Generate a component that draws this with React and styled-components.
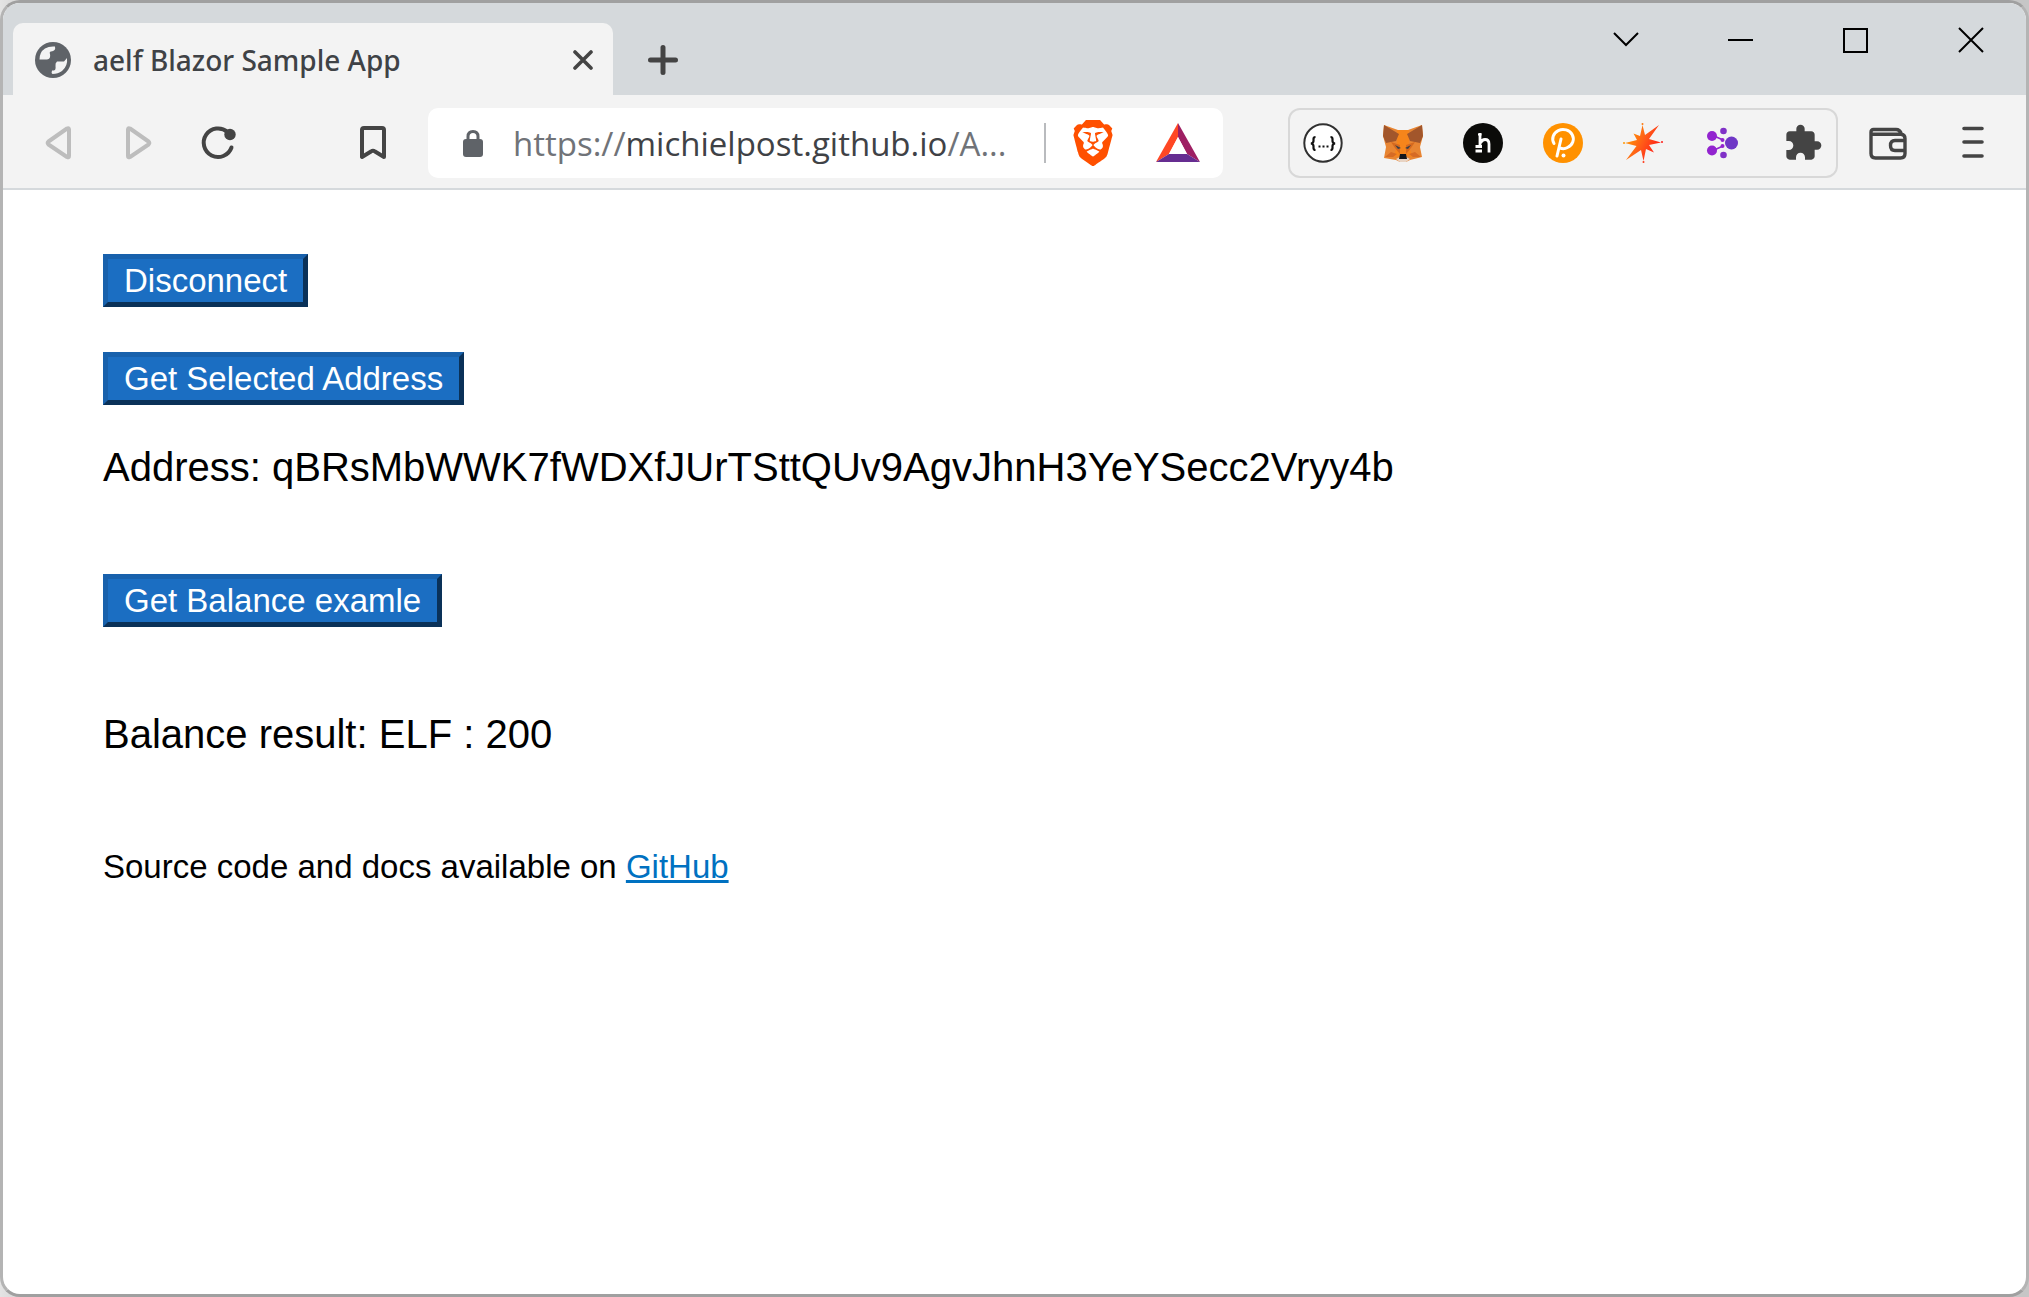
import React from "react";
import styled, { createGlobalStyle } from "styled-components";
import { SiBrave } from "react-icons/si";
import { MdExtension } from "react-icons/md";

const UI_FONT = '"Open Sans", "Noto Sans", sans-serif';
const TITLE_FONT = '"Noto Sans", "Open Sans", sans-serif';
const PAGE_FONT = '"Liberation Sans", Arial, sans-serif';

const GlobalStyle = createGlobalStyle`
  * { box-sizing: border-box; }
  body { margin: 0; background: #c4c4c4; }
  svg { display: block; }
`;

const Desktop = styled.div`
  min-height: 100vh;
  display: flex;
  background: linear-gradient(90deg, #e4e4e4, #c6c6c6 40px, #c6c6c6);
`;

const BrowserWindow = styled.div`
  flex: 1;
  min-width: 0;
  display: flex;
  flex-direction: column;
  border: 3px solid #a0a0a0;
  border-left-color: #b4b4b4;
  border-right-color: #b4b4b4;
  border-radius: 20px;
  background: #fff;
  overflow: hidden;
`;

const TabStrip = styled.header`
  display: flex;
  align-items: flex-end;
  height: 92px;
  padding-left: 10px;
  background: #d5d9dc;
`;

const Tab = styled.div`
  display: flex;
  align-items: center;
  width: 600px;
  height: 72px;
  padding: 2px 20px 0 22px;
  border-radius: 10px 10px 0 0;
  background: #f3f3f3;
`;

const TabTitle = styled.span`
  flex: 1;
  margin-left: 22px;
  font: 500 28px/38px ${TITLE_FONT};
  color: #3f4246;
  white-space: nowrap;
`;

const IconButton = styled.button`
  display: flex;
  align-items: center;
  justify-content: center;
  flex: none;
  width: ${(p) => p.$width || 40}px;
  height: ${(p) => p.$height || 40}px;
  padding: 0;
  border: 0;
  background: none;
  color: ${(p) => p.$color || "#444"};
`;

const NewTab = styled.div`
  display: flex;
  align-items: center;
  height: 72px;
  margin-left: 30px;
  padding-top: 2px;
`;

const WindowControls = styled.div`
  display: flex;
  gap: 4px;
  align-self: flex-start;
  margin-left: auto;
`;

const Toolbar = styled.nav`
  display: flex;
  align-items: center;
  height: 95px;
  padding: 3px 33px 0 35px;
  border-bottom: 2px solid #d5d9dc;
  background: #f3f3f3;
`;

const NavButtons = styled.div`
  display: flex;
  gap: 40px;
`;

const BookmarkSlot = styled.div`
  margin: 0 35px 0 115px;
`;

const AddressBar = styled.div`
  display: flex;
  align-items: center;
  flex: 1;
  min-width: 0;
  height: 70px;
  padding: 0 20px 0 30px;
  border-radius: 10px;
  background: #fff;
`;

const Url = styled.div`
  flex: 1;
  min-width: 0;
  margin-left: 25px;
  padding-top: 2px;
  font: 400 33px/46px ${UI_FONT};
  color: #707378;
  white-space: nowrap;
`;

const Host = styled.span`
  color: #3f4246;
`;

const Divider = styled.span`
  width: 2px;
  height: 40px;
  margin-right: 22px;
  background: #b9bbbe;
`;

const ShieldGroup = styled.div`
  display: flex;
  gap: 35px;
`;

const Extensions = styled.div`
  display: flex;
  align-items: center;
  gap: 40px;
  height: 70px;
  margin-left: 65px;
  padding: 0 13px;
  border: 2px solid #d8d8d8;
  border-radius: 12px;
`;

const MenuGroup = styled.div`
  display: flex;
  gap: 45px;
  margin-left: 30px;
`;

const Page = styled.main`
  flex: 1;
  display: flex;
  flex-direction: column;
  align-items: flex-start;
  padding: 64px 100px;
  font-family: ${PAGE_FONT};
  color: #000;
`;

const ActionButton = styled.button`
  margin: 0 0 ${(p) => p.$after || 0}px;
  padding: 3px 16px 2px;
  border: 5px solid;
  border-color: #1861ac #0a3158 #0a3158 #1861ac;
  background: #1b6ec2;
  color: #fff;
  font: 400 33px/38px ${PAGE_FONT};
`;

const Result = styled.p`
  margin: 0 0 ${(p) => p.$after}px;
  font-size: 40px;
  line-height: 46px;
`;

const Source = styled.p`
  margin: 0;
  font-size: 33px;
  line-height: 40px;
`;

const SourceLink = styled.a`
  color: #0071c1;
  text-decoration: underline;
  text-decoration-thickness: 3px;
`;

const Globe = () => (
  <svg width="36" height="36" viewBox="0 0 36 36">
    <circle cx="18" cy="18" r="18" fill="#5f6368" />
    <path fill="#f3f3f3" d="M20 4.200Q20.500 7 18.500 8.200Q14.500 8 14.500 11V13.500Q14.500 15.500 12 15.500H9.500V18H16Q19.500 18.500 19.500 22V23.500H22Q23 24.500 22 26Q19 27 19 28V31.500Q27 31 30.500 24.500Q32.500 20.500 32 16.500L29 18.500Q27.500 20 25.500 18.500Q21 18.500 21 14.500Q21 12 24 11Q26.500 10.500 27 7.500L24 5.500Z" opacity="0" />
    <path fill="#f3f3f3" d="M20 4.500Q21 9 16 9.500Q14 10 15 12Q16 17 12 17.500H4.500Q4.500 10 10 6.500Q14 4 20 4.500Z" />
    <path fill="#f3f3f3" d="M32 16Q33 24 27 29Q23 32 17.500 32Q16 31 17 28.500H19Q21 28 20.500 24Q20 21 22 19.500H29Z" />
  </svg>
);

const Lock = () => (
  <svg width="30" height="30" viewBox="0 0 30 30">
    <rect x="5" y="11" width="20" height="18" rx="3" fill="#5f6368" />
    <path d="M10 13V8.500Q10 3.500 15 3.500Q20 3.500 20 8.500V13" fill="none" stroke="#5f6368" strokeWidth="3" />
  </svg>
);

const Triangle = ({ flip }) => (
  <svg width="40" height="40" viewBox="0 0 40 40" fill="none" stroke="currentColor" strokeWidth="4" strokeLinejoin="round">
    <path d={flip ? "M10 6.500Q10 4.500 12 5.500L30.500 18.500Q32 20 30.500 21.500L12 34Q10 35 10 33Z" : "M31 6.500Q31 4.500 29 5.500L10.500 18.500Q9 20 10.500 21.500L29 34Q31 35 31 33Z"} />
  </svg>
);

const Reload = () => (
  <svg width="40" height="40" viewBox="0 0 40 40" fill="none">
    <path d="M29.500 9A14.300 14.300 0 1 0 33.500 24.500" stroke="currentColor" strokeWidth="4" strokeLinecap="round" />
    <circle cx="32" cy="11.500" r="5.700" fill="currentColor" />
  </svg>
);

const Bookmark = () => (
  <svg width="40" height="40" viewBox="0 0 40 40" fill="none" stroke="currentColor" strokeWidth="4" strokeLinejoin="round">
    <path d="M9 7Q9 5 11 5H29Q31 5 31 7V34L22 28.500Q20 27 18 28.500L9 34Z" />
  </svg>
);

const Bat = () => (
  <svg width="44" height="40" viewBox="0 0 44 40">
    <path fill="#ff4724" d="M22 0V14L13 31L0 39Z" />
    <path fill="#9e1f63" d="M22 0L44 39L31 31L22 14Z" />
    <path fill="#662d91" d="M0 39L13 31H31L44 39Z" />
    <path fill="#fff" d="M22 14L31 31H13Z" />
  </svg>
);

const Braces = () => (
  <svg width="40" height="40" viewBox="0 0 40 40" fill="none">
    <circle cx="20" cy="20" r="18.700" fill="#fff" stroke="#303030" strokeWidth="2" />
    <path d="M12.500 14Q10.500 14 10.500 16V18Q10.500 20 8 20.500Q10.500 21 10.500 23V25Q10.500 27 12.500 27M27.500 14Q29.500 14 29.500 16V18Q29.500 20 32 20.500Q29.500 21 29.500 23V25Q29.500 27 27.500 27" stroke="#111" strokeWidth="2.200" />
    <path d="M15.500 23.500h2M19.500 23.500h2M23.500 23.500h2" stroke="#111" strokeWidth="2" />
  </svg>
);

const Fox = () => (
  <svg width="40" height="40" viewBox="0 0 40 40">
    <path fill="#e88532" d="M1 2L15 7H25L39 2L40 13L37 24L39 34L27 37L23 39H17L13 37L1 35L3 24L0 13Z" />
    <path fill="#f6851b" d="M14 7H26L26 24L30 34L24 33H16L10 34L14 24Z" />
    <path fill="#a2562b" d="M1 2L16 11L13 18L3 20L0 13ZM39 2L24 11L27 18L37 20L40 13Z" />
    <path fill="#d5691f" d="M8 19L17 22V31L12 25ZM32 19L23 22V31L28 25Z" />
    <path fill="#3a3f48" d="M12 22L18 25L15 26ZM28 22L22 25L25 26Z" />
    <path fill="#e8d4c4" d="M13 36L17 34H23L27 36L23 39H17Z" />
    <path fill="#16181c" d="M17 31H23L24 36H16Z" />
    <path fill="#d66b25" d="M8 29L14 31L10 34L2 34ZM32 29L26 31L30 34L38 34Z" />
  </svg>
);

const HLogo = () => (
  <svg width="40" height="40" viewBox="0 0 40 40" fill="none" stroke="#fff">
    <circle cx="20" cy="20" r="20" fill="#0b0b09" stroke="none" />
    <path d="M17 10V23M12.500 23.500H19M12.500 28H19M17.500 20Q19 16.500 22 16.500Q26 16.500 26 21V29.500" strokeWidth="2.800" />
    <path d="M15 11.500H18.500" strokeWidth="2" />
  </svg>
);

const Polkadot = () => (
  <svg width="40" height="40" viewBox="0 0 40 40" fill="none">
    <circle cx="20" cy="20" r="20" fill="#ff9100" />
    <path d="M11 20.500A10.300 9.500 0 1 1 24.500 24.500Q21 26.500 17 25M18 16L14 33" stroke="#fff" strokeWidth="3" strokeLinecap="round" />
    <circle cx="20.500" cy="32.500" r="2" fill="#fff" />
  </svg>
);

const Spark = () => (
  <svg width="40" height="40" viewBox="0 0 40 40">
    <defs>
      <linearGradient id="spark-fill" x1="0" y1="10" x2="36" y2="28" gradientUnits="userSpaceOnUse">
        <stop offset="0" stopColor="#ffab00" />
        <stop offset=".55" stopColor="#ff5a18" />
        <stop offset="1" stopColor="#ff1717" />
      </linearGradient>
    </defs>
    <g fill="url(#spark-fill)">
      <path d="M19.500 2L22 12L36 2L26 16L38 19.500L26 22L31 29.500L23 26L20.500 38L18 27L3 37L13.500 23L2 20L14 17L10.500 10.500L17 13Z" />
      <circle cx="19.500" cy="1" r="1" /><circle cx="39" cy="19" r="1" />
      <circle cx="20.500" cy="39" r="1" /><circle cx="1" cy="20" r="1" />
    </g>
  </svg>
);

const Molecule = () => (
  <svg width="40" height="40" viewBox="0 0 40 40">
    <g fill="#9223cf" stroke="#9223cf">
      <path d="M9 12L20 17M9 28L20 23" fill="none" strokeWidth="1.500" />
      <g stroke="none">
        <circle cx="9" cy="13" r="5" /><circle cx="9" cy="27.500" r="5" />
        <circle cx="19.500" cy="17" r="2" /><circle cx="19.500" cy="23" r="2" />
      </g>
    </g>
    <circle cx="20.500" cy="8" r="3.300" fill="#8031c7" /><circle cx="20.500" cy="32" r="3.300" fill="#8031c7" />
    <circle cx="28.500" cy="20" r="6.500" fill="#6f36c6" />
  </svg>
);

const Wallet = () => (
  <svg width="40" height="40" viewBox="0 0 40 40" fill="none" stroke="currentColor" strokeWidth="3.400" strokeLinejoin="round">
    <path d="M3 9V30.500Q3 35 7.500 35H32.500Q37 35 37 30.500V15.500Q37 11.500 33 11.200H4M3 9Q3 6.500 5.500 6.500H28Q32 6.500 33.500 11.200M36 17.500H27Q22.500 17.500 22.500 22.500Q22.500 27.500 27 27.500H36" />
  </svg>
);

const Menu = () => (
  <svg width="40" height="40" viewBox="0 0 40 40" stroke="currentColor" strokeWidth="3.600" strokeLinecap="round">
    <path d="M11 5.500H29M11 19H29M11 33H29" />
  </svg>
);

const CloseTab = () => (
  <svg width="20" height="20" viewBox="0 0 20 20" stroke="currentColor" strokeWidth="3.600" strokeLinecap="round">
    <path d="M2 2L18 18M18 2L2 18" />
  </svg>
);

const Plus = () => (
  <svg width="30" height="30" viewBox="0 0 30 30" stroke="currentColor" strokeWidth="5" strokeLinecap="round">
    <path d="M15 2.500V27.500M2.500 15H27.500" />
  </svg>
);

const CONTROL_PATHS = {
  "Search tabs": "M1 6L13 18L25 6",
  Minimize: "M0 13H25",
  Maximize: "M1 2H24V25H1Z",
  Close: "M1 1L25 25M25 1L1 25",
};

const EXTENSIONS = [
  ["JSON viewer", <Braces />],
  ["Fox wallet", <Fox />],
  ["HashPack", <HLogo />],
  ["Polkadot", <Polkadot />],
  ["Spark", <Spark />],
  ["aelf", <Molecule />],
  ["Extensions", <MdExtension size={42} />],
];

export default function App() {
  return (
    <Desktop>
      <GlobalStyle />
      <BrowserWindow>
        <TabStrip>
          <Tab>
            <Globe />
            <TabTitle>aelf Blazor Sample App</TabTitle>
            <IconButton $width={20} aria-label="Close tab"><CloseTab /></IconButton>
          </Tab>
          <NewTab>
            <IconButton aria-label="New tab"><Plus /></IconButton>
          </NewTab>
          <WindowControls>
            {Object.entries(CONTROL_PATHS).map(([name, d]) => (
              <IconButton key={name} $width={111} $height={73} $color="#000" aria-label={name}>
                <svg width="26" height="26" viewBox="0 0 26 26" fill="none" stroke="currentColor" strokeWidth="2">
                  <path d={d} />
                </svg>
              </IconButton>
            ))}
          </WindowControls>
        </TabStrip>
        <Toolbar>
          <NavButtons>
            <IconButton $color="#bdbdbd" aria-label="Back"><Triangle /></IconButton>
            <IconButton $color="#bdbdbd" aria-label="Forward"><Triangle flip /></IconButton>
            <IconButton aria-label="Reload"><Reload /></IconButton>
          </NavButtons>
          <BookmarkSlot>
            <IconButton aria-label="Bookmark"><Bookmark /></IconButton>
          </BookmarkSlot>
          <AddressBar>
            <Lock />
            <Url>https://<Host>michielpost.github.io</Host>/A...</Url>
            <Divider />
            <ShieldGroup>
              <IconButton $width={50} $height={46} aria-label="Shields"><SiBrave size={46} color="#ff5000" /></IconButton>
              <IconButton $width={50} $height={46} aria-label="Rewards"><Bat /></IconButton>
            </ShieldGroup>
          </AddressBar>
          <Extensions>
            {EXTENSIONS.map(([name, icon]) => (
              <IconButton key={name} aria-label={name}>{icon}</IconButton>
            ))}
          </Extensions>
          <MenuGroup>
            <IconButton aria-label="Wallet"><Wallet /></IconButton>
            <IconButton aria-label="Menu"><Menu /></IconButton>
          </MenuGroup>
        </Toolbar>
        <Page>
          <ActionButton type="button" $after={45}>Disconnect</ActionButton>
          <ActionButton type="button" $after={39}>Get Selected Address</ActionButton>
          <Result $after={84}>Address: qBRsMbWWK7fWDXfJUrTSttQUv9AgvJhnH3YeYSecc2Vryy4b</Result>
          <ActionButton type="button" $after={84}>Get Balance examle</ActionButton>
          <Result $after={90}>Balance result: ELF : 200</Result>
          <Source>
            Source code and docs available on <SourceLink href="https://github.com/michielpost">GitHub</SourceLink>
          </Source>
        </Page>
      </BrowserWindow>
    </Desktop>
  );
}
